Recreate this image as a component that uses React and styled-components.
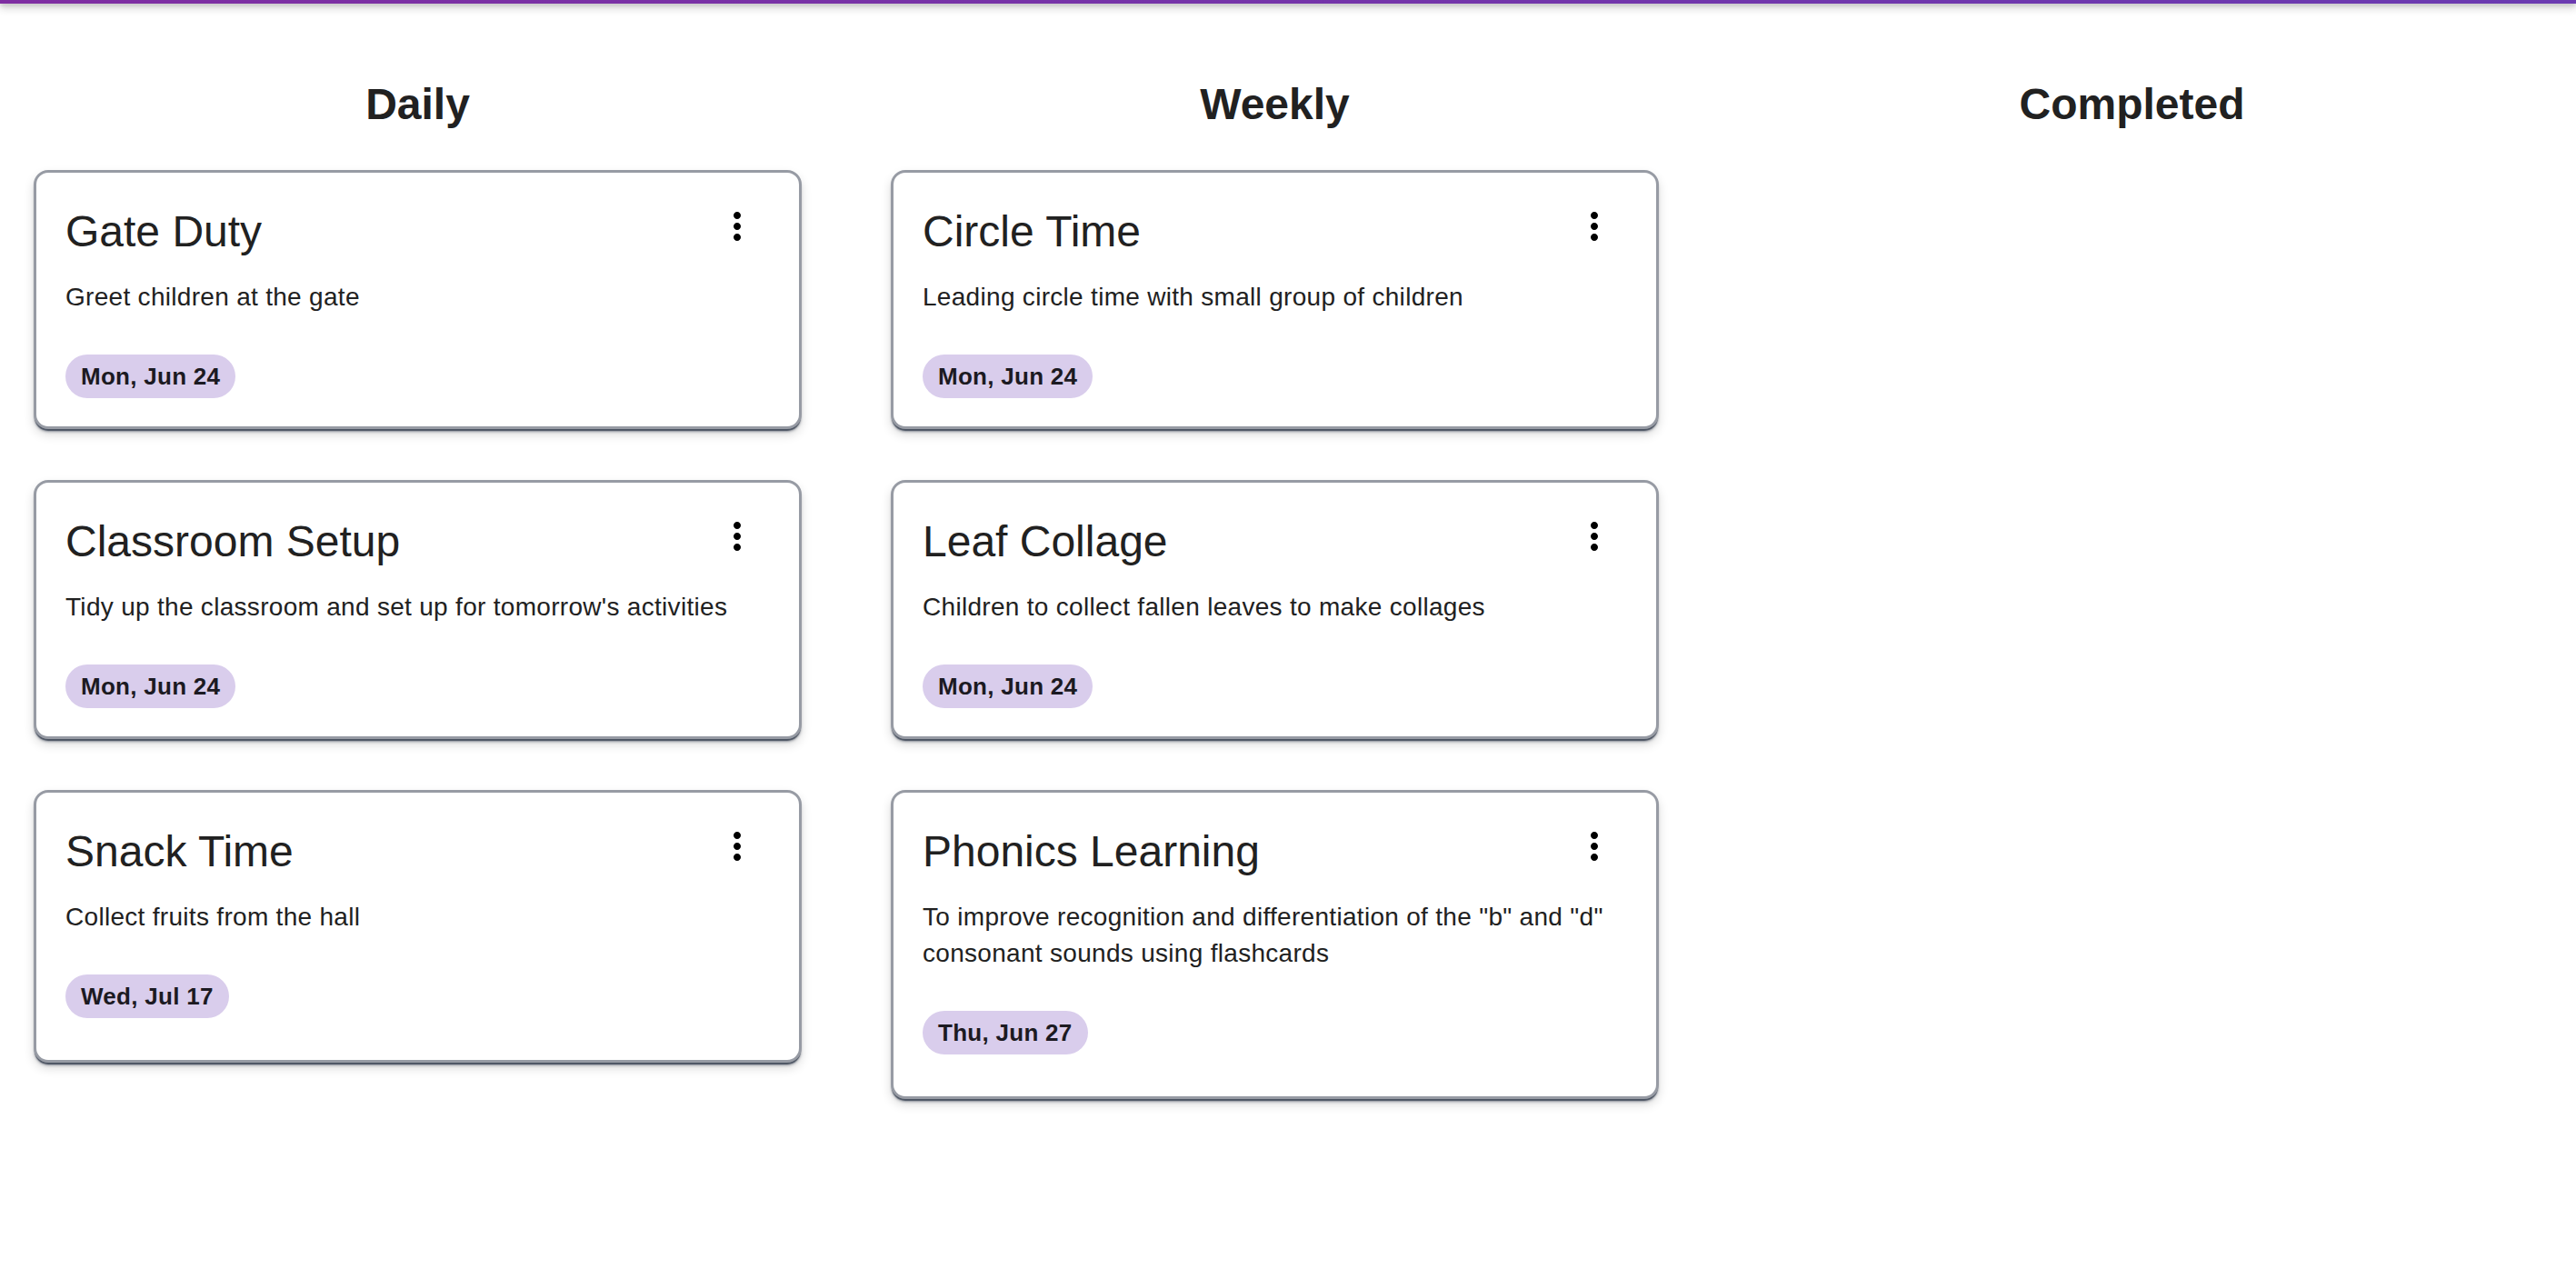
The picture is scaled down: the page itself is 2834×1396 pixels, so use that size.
import React from "react";
import styled, { createGlobalStyle } from "styled-components";

const GlobalStyle = createGlobalStyle`
  html, body {
    margin: 0;
    padding: 0;
    background: #ffffff;
    font-family: "Liberation Sans", Arial, Helvetica, sans-serif;
  }
  * { box-sizing: border-box; }
`;

const Page = styled.div`
  min-height: 1396px;
  background: #ffffff;
`;

const TopBar = styled.div`
  height: 4px;
  background: linear-gradient(90deg, #7f2ea2 0%, #6b3bb1 100%);
  box-shadow: 0 4px 10px rgba(0, 0, 0, 0.28), 0 2px 4px rgba(0, 0, 0, 0.18);
`;

const Board = styled.div`
  display: flex;
  align-items: flex-start;
  gap: 98px;
  padding: 83px 0 0 37px;
`;

const Column = styled.section`
  width: 845px;
  display: flex;
  flex-direction: column;
`;

const ColumnTitle = styled.h2`
  margin: 0 0 44px;
  text-align: center;
  font-size: 48px;
  line-height: 56px;
  font-weight: 700;
  color: #212121;
`;

const CardList = styled.div`
  display: flex;
  flex-direction: column;
  gap: 56px;
`;

const Card = styled.article`
  background: #ffffff;
  border: 3px solid #979ba4;
  border-radius: 16px;
  padding: 33px 32px ${(p) => (p.$last ? "46px" : "31px")};
  box-shadow: 0 3px 1px -1px rgba(72, 80, 95, 0.95), 0 4px 3px -1px rgba(72, 80, 95, 0.5),
    0 6px 12px rgba(0, 0, 0, 0.14);
`;

const CardHeader = styled.div`
  display: flex;
  justify-content: space-between;
  align-items: flex-start;
`;

const CardTitle = styled.h3`
  margin: 0;
  font-size: 48px;
  line-height: 64px;
  font-weight: 400;
  color: #212121;
`;

const MenuButton = styled.button`
  width: 48px;
  height: 48px;
  margin: 2px 12px 0 0;
  padding: 0;
  border: none;
  background: transparent;
  display: flex;
  align-items: center;
  justify-content: center;
  cursor: pointer;
  flex-shrink: 0;
`;

const Description = styled.p`
  margin: 20px 0 0;
  font-size: 28px;
  line-height: 40px;
  letter-spacing: 0.01071em;
  color: #212121;
`;

const ChipRow = styled.div`
  margin-top: 43px;
  display: flex;
`;

const Chip = styled.span`
  display: inline-flex;
  align-items: center;
  height: 48px;
  padding: 0 17px;
  border-radius: 24px;
  background: #d9cdec;
  font-size: 26px;
  font-weight: 700;
  letter-spacing: 0.01071em;
  color: #1c1a22;
  white-space: nowrap;
`;

const MoreVert = () => (
  <svg width="48" height="48" viewBox="0 0 24 24" aria-hidden="true">
    <path
      fill="#000"
      d="M12 8c1.1 0 2-.9 2-2s-.9-2-2-2-2 .9-2 2 .9 2 2 2zm0 2c-1.1 0-2 .9-2 2s.9 2 2 2 2-.9 2-2-.9-2-2-2zm0 6c-1.1 0-2 .9-2 2s.9 2 2 2 2-.9 2-2-.9-2-2-2z"
    />
  </svg>
);

const columns = [
  {
    title: "Daily",
    tasks: [
      { title: "Gate Duty", desc: "Greet children at the gate", date: "Mon, Jun 24" },
      {
        title: "Classroom Setup",
        desc: "Tidy up the classroom and set up for tomorrow's activities",
        date: "Mon, Jun 24",
      },
      { title: "Snack Time", desc: "Collect fruits from the hall", date: "Wed, Jul 17" },
    ],
  },
  {
    title: "Weekly",
    tasks: [
      {
        title: "Circle Time",
        desc: "Leading circle time with small group of children",
        date: "Mon, Jun 24",
      },
      {
        title: "Leaf Collage",
        desc: "Children to collect fallen leaves to make collages",
        date: "Mon, Jun 24",
      },
      {
        title: "Phonics Learning",
        desc: 'To improve recognition and differentiation of the "b" and "d" consonant sounds using flashcards',
        date: "Thu, Jun 27",
      },
    ],
  },
  { title: "Completed", tasks: [] },
];

const TaskCard = ({ task, last }) => (
  <Card $last={last}>
    <CardHeader>
      <CardTitle>{task.title}</CardTitle>
      <MenuButton aria-label="more">
        <MoreVert />
      </MenuButton>
    </CardHeader>
    <Description>{task.desc}</Description>
    <ChipRow>
      <Chip>{task.date}</Chip>
    </ChipRow>
  </Card>
);

export default function App() {
  return (
    <Page>
      <GlobalStyle />
      <TopBar />
      <Board>
        {columns.map((col) => (
          <Column key={col.title}>
            <ColumnTitle>{col.title}</ColumnTitle>
            <CardList>
              {col.tasks.map((t, i) => (
                <TaskCard key={t.title} task={t} last={i === col.tasks.length - 1} />
              ))}
            </CardList>
          </Column>
        ))}
      </Board>
    </Page>
  );
}
